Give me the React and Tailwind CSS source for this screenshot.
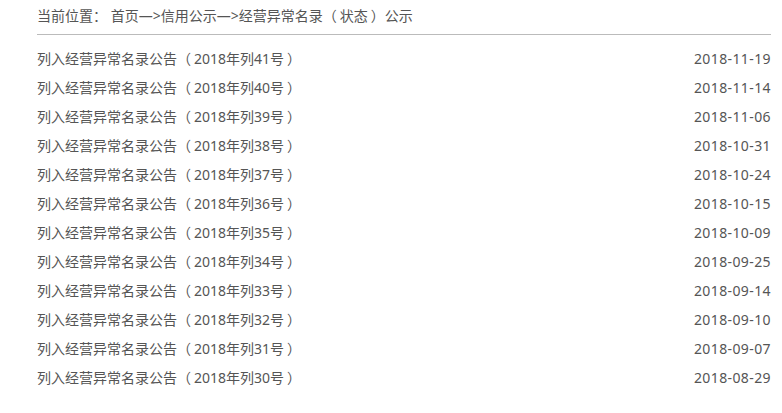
import React from "react";

const ITEMS = [
  ["41", "2018-11-19"],
  ["40", "2018-11-14"],
  ["39", "2018-11-06"],
  ["38", "2018-10-31"],
  ["37", "2018-10-24"],
  ["36", "2018-10-15"],
  ["35", "2018-10-09"],
  ["34", "2018-09-25"],
  ["33", "2018-09-14"],
  ["32", "2018-09-10"],
  ["31", "2018-09-07"],
  ["30", "2018-08-29"]
];

const Open = () => (
  <span className="pr-[3px]" style={{ fontFamily: '"Noto Sans CJK TC", sans-serif' }}>（</span>
);
const Close = () => (
  <span className="pl-[3px]" style={{ fontFamily: '"Noto Sans CJK TC", sans-serif' }}>）</span>
);

function App() {
  return (
    <div
      className="w-[782px] h-[413px] bg-white pl-[37px] pr-[11px] text-[14px] text-[#555]"
      style={{ fontFamily: '"Noto Sans", "Noto Sans CJK SC", sans-serif' }}
    >
      <div className="h-[35px] border-b border-[#bbb] leading-[30px]">
        当前位置： 首页—&gt;信用公示—&gt;经营异常名录<Open />状态<Close />公示
      </div>
      <ul className="pt-[9px]">
        {ITEMS.map(([no, date]) => (
          <li key={no} className="flex justify-between h-[29px] leading-[29px]">
            <a href="#" className="text-[#555]">
              列入经营异常名录公告<Open />2018年列{no}号<Close />
            </a>
            <span className="tracking-[0.4px]">{date}</span>
          </li>
        ))}
      </ul>
    </div>
  );
}

export default App;
